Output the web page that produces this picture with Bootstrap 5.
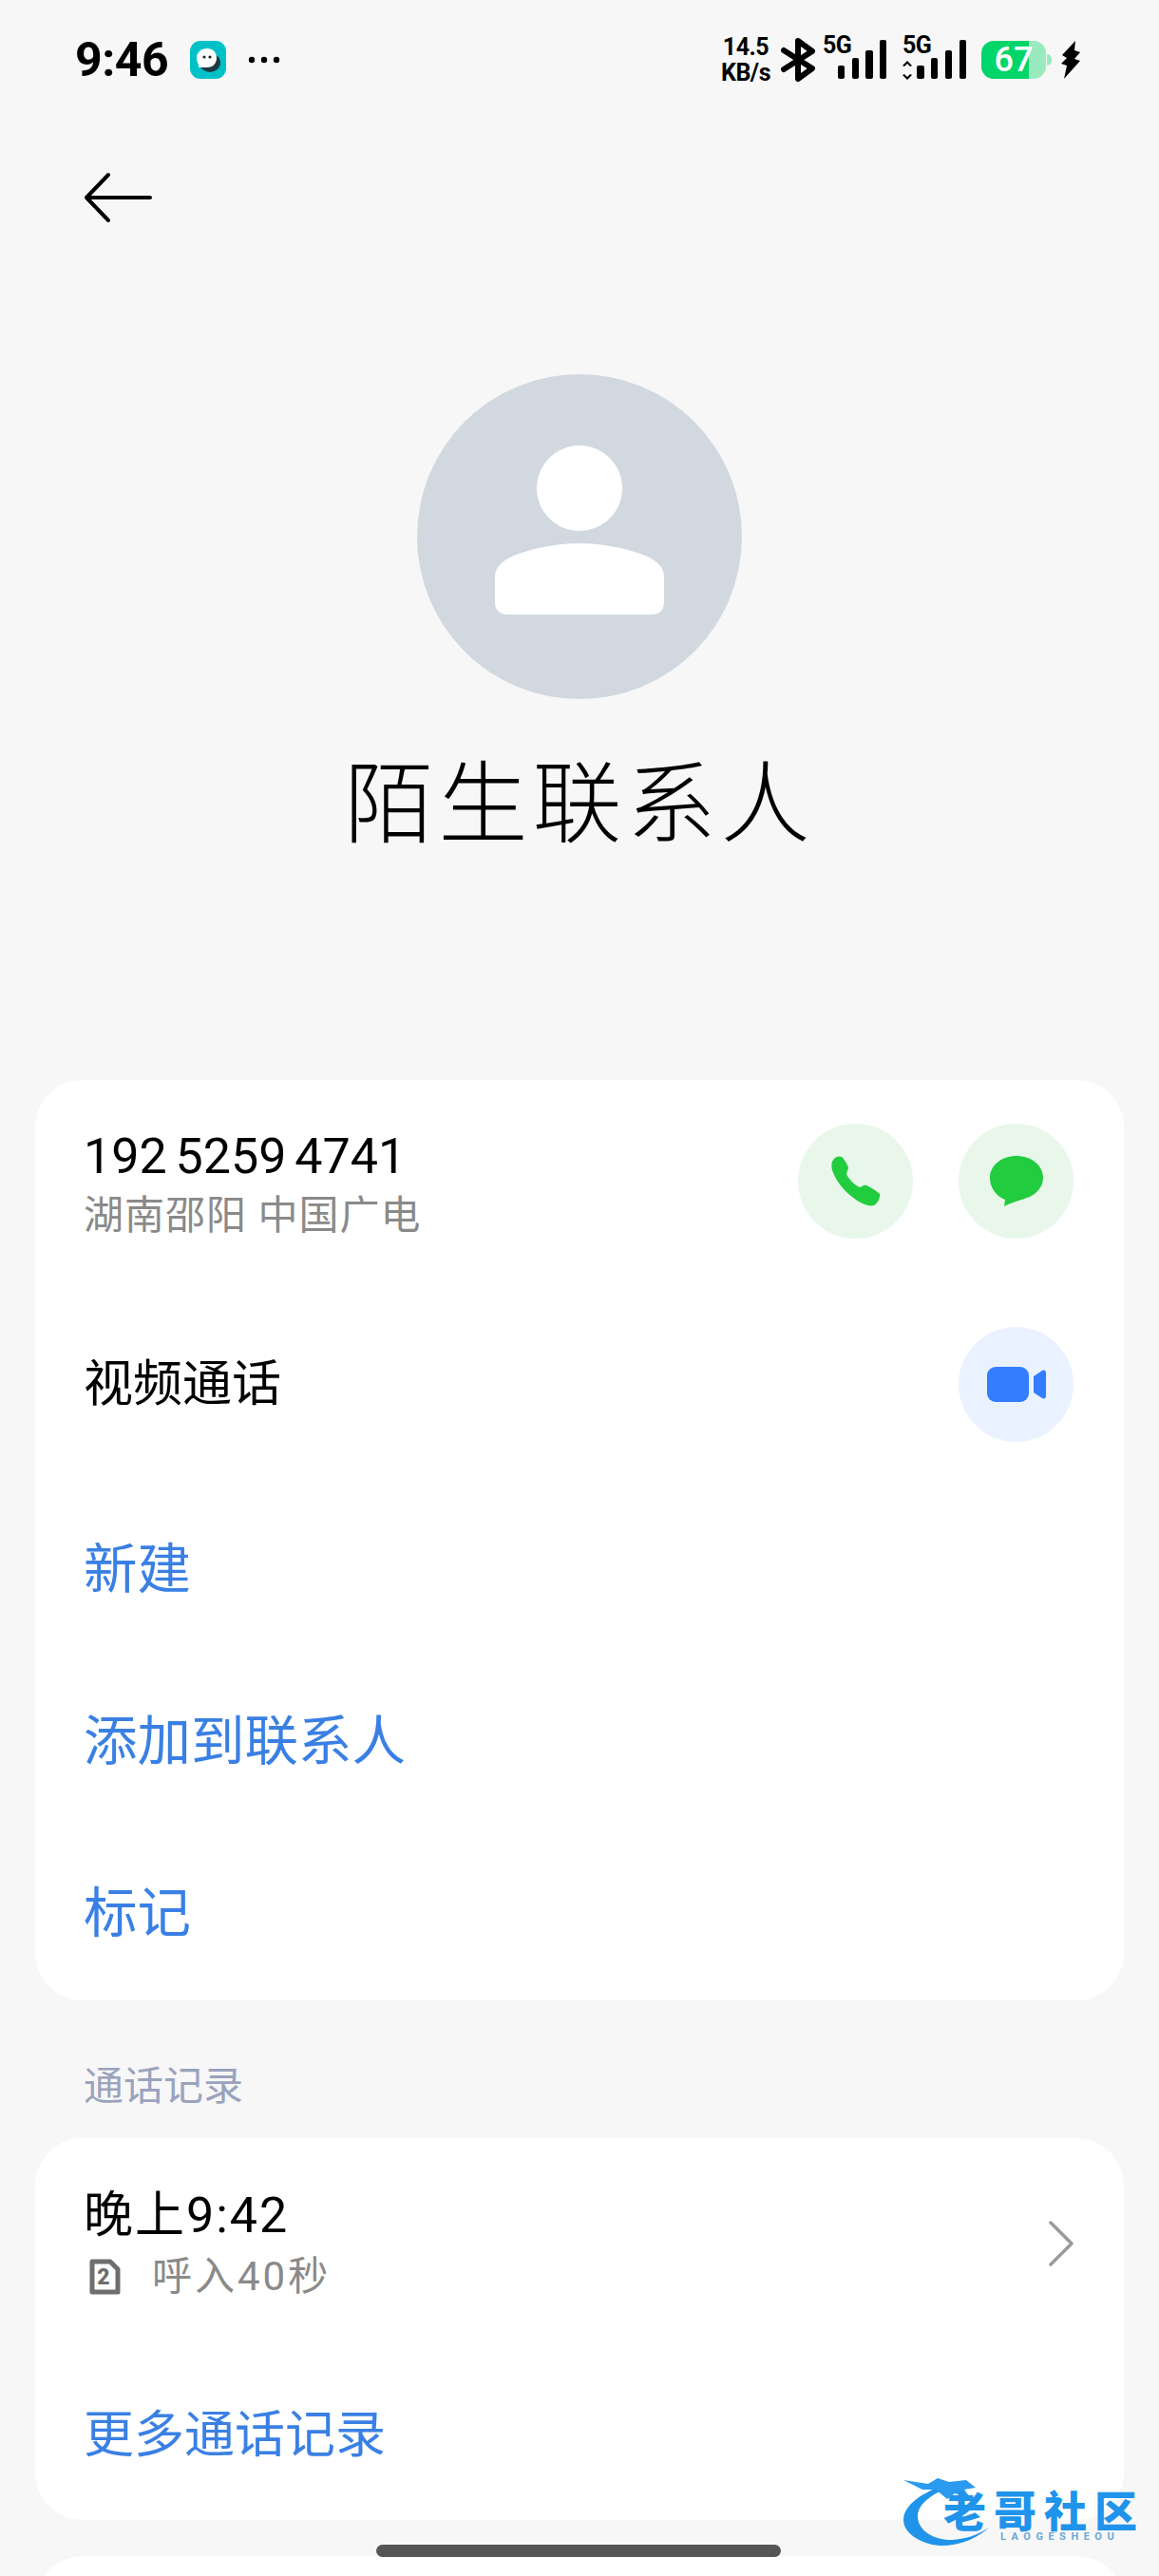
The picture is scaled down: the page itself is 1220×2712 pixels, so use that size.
<!DOCTYPE html>
<html lang="zh-CN">
<head>
  <meta charset="UTF-8">
  <meta name="viewport" content="width=device-width, initial-scale=1.0">
  <title>陌生联系人</title>

  <!-- Bootstrap CSS -->
  <link href="https://cdn.jsdelivr.net/npm/bootstrap@5.3.2/dist/css/bootstrap.min.css" rel="stylesheet">

  <style>
    body {
      background-color: #f7f7f7;
      font-family: Roboto, "Noto Sans CJK SC", sans-serif;
      color: #000;
      overflow: hidden;
    }

    .phone-page {
      position: relative;
      width: 1220px;
      height: 2712px;
      overflow: hidden;
    }

    .status-row {
      height: 126px;
      padding: 0 83px 0 79px;
    }

    .clock {
      width: 106px;
      font-size: 50px;
      font-weight: 700;
      letter-spacing: -.5px;
      line-height: 1;
    }

    .app-badge {
      width: 38px;
      height: 40px;
      margin-left: 15px;
    }

    .more-dots {
      width: 34px;
      height: 8px;
      margin-left: 23px;
    }

    .speed {
      width: 56px;
      margin-right: 9px;
      font-size: 25px;
      font-weight: 700;
      line-height: 27px;
      text-align: center;
      letter-spacing: -.5px;
    }

    .signal-box {
      position: relative;
      width: 68px;
      height: 44px;
    }

    .signal-box svg { display: block; }

    .five-g {
      position: absolute;
      top: -7px;
      left: 0;
      font-size: 25px;
      font-weight: 700;
      line-height: 28px;
      letter-spacing: -.5px;
    }

    .battery {
      position: relative;
      width: 68px;
      height: 40px;
      margin-left: 15px;
      border-radius: 13px;
      background: linear-gradient(90deg, #00d56a 0 74%, #9aeabf 74% 100%);
      color: #fff;
      font-size: 36px;
      font-weight: 500;
      line-height: 40px;
      text-align: center;
    }

    .battery::after {
      content: "";
      position: absolute;
      top: 14px;
      right: -6px;
      width: 5px;
      height: 12px;
      border-radius: 0 6px 6px 0;
      background: #9aeabf;
    }

    .back-row {
      height: 164px;
      padding-left: 88px;
    }

    .avatar {
      width: 342px;
      height: 342px;
      margin-top: 104px;
      background-color: #d1d8e0;
    }

    .contact-name {
      margin: 50px 0 0;
      font-size: 94px;
      font-weight: 300;
      letter-spacing: 5px;
      line-height: 124px;
      text-align: center;
    }

    .info-sheet {
      margin: 0 37px;
      border: 0;
      border-radius: 50px;
      background: #fff;
    }

    .sheet-main {
      margin-top: 227px;
      padding: 46px 53px 0 51px;
    }

    .line-top {
      height: 121px;
    }

    .line-video {
      height: 121px;
      margin-top: 93px;
      font-size: 52px;
    }

    .round-btn {
      flex: 0 0 121px;
      width: 121px;
      height: 121px;
      background-color: #e8f7ea;
    }

    .round-btn.video-tint { background-color: #e9f2fe; }

    .number-text {
      font-size: 52px;
      line-height: 60px;
      margin-top: 5px;
      word-spacing: -4px;
    }

    .place-text {
      margin-top: 7px;
      font-size: 42px;
      line-height: 50px;
      color: #8a8a8a;
      letter-spacing: 1px;
    }

    .action-line {
      height: 181px;
      font-size: 56.500px;
      color: #3a80e4;
    }

    .action-list { margin-top: 45px; }

    .section-label {
      margin: 0;
      padding: 65px 0 0 88px;
      height: 145px;
      font-size: 42px;
      line-height: 52px;
      color: #9aa3bd;
    }

    .call-sheet {
      height: 402px;
      padding: 51px 53px 0 51px;
    }

    .call-time {
      font-size: 52px;
      line-height: 62px;
      letter-spacing: 2px;
    }

    .call-sub {
      margin-top: 8px;
      font-size: 42px;
      line-height: 50px;
      color: #8a8a8a;
      letter-spacing: 3px;
    }

    .sim-icon { margin: 0 33px 0 6px; }

    .more-calls {
      margin-top: 111px;
      font-size: 53px;
      line-height: 62px;
      color: #3a80e4;
    }

    .next-sheet {
      height: 100px;
      margin-top: 38px;
    }

    .home-bar {
      position: absolute;
      left: 396px;
      top: 2679px;
      width: 426px;
      height: 13px;
      border-radius: 7px;
      background: #555;
    }

    .watermark {
      position: absolute;
      left: 950px;
      top: 2603px;
      width: 252px;
      height: 80px;
    }

    .watermark-title {
      position: absolute;
      left: 43px;
      top: 24px;
      font-size: 45px;
      font-weight: 900;
      line-height: 38px;
      letter-spacing: 8px;
      white-space: nowrap;
      color: #1f94ea;
    }

    .watermark-sub {
      position: absolute;
      left: 103px;
      top: 62px;
      font-size: 11px;
      font-weight: 700;
      line-height: 11px;
      letter-spacing: 5.500px;
      color: #6aa8d8;
    }
  </style>
</head>
<body>
  <div class="phone-page">
    <!-- Status bar -->
    <div class="status-row d-flex align-items-center">
      <span class="clock">9:46</span>
      <svg class="app-badge" viewBox="0 0 38 40">
        <rect width="38" height="40" rx="11" fill="#00c1c8"/>
        <ellipse cx="21" cy="23" rx="11" ry="10" fill="#1d3a44"/>
        <path d="M18 8c6 0 10 4 10 10s-4 10-10 10h-9v-3c-1-2-2-4-2-7 0-6 5-10 11-10z" fill="#fff"/>
        <circle cx="15" cy="17" r="1.6" fill="#222"/>
        <circle cx="21" cy="17" r="1.6" fill="#222"/>
      </svg>
      <svg class="more-dots" viewBox="0 0 34 8">
        <circle cx="4" cy="4" r="3.2"/>
        <circle cx="17" cy="4" r="3.2"/>
        <circle cx="30" cy="4" r="3.2"/>
      </svg>

      <div class="d-flex align-items-center ms-auto">
        <div class="speed">14.5<br>KB/s</div>
        <svg width="36" height="46" viewBox="0 0 36 46" class="me-2" fill="none" stroke="#000" stroke-width="6" stroke-linejoin="round" stroke-linecap="round">
          <path d="M3 13 33 32 18 43V3l15 11L3 33"/>
        </svg>
        <div class="signal-box">
          <span class="five-g">5G</span>
          <svg width="68" height="44" viewBox="0 0 68 44">
            <rect x="16" y="28" width="7" height="14" rx="2"/>
            <rect x="31" y="20" width="7" height="22" rx="2"/>
            <rect x="45" y="12" width="8" height="30" rx="2"/>
            <rect x="60" y="1" width="7" height="41" rx="2"/>
          </svg>
        </div>
        <div class="signal-box ms-3">
          <span class="five-g">5G</span>
          <svg width="68" height="44" viewBox="0 0 68 44">
            <path d="M5 23l5 5-2 1-3-3-3 3-2-1zM5 43l5-5-2-1-3 3-3-3-2 1z"/>
            <rect x="15" y="28" width="8" height="14" rx="2"/>
            <rect x="30" y="20" width="7" height="22" rx="2"/>
            <rect x="45" y="12" width="7" height="30" rx="2"/>
            <rect x="60" y="1" width="7" height="41" rx="2"/>
          </svg>
        </div>
        <div class="battery">67</div>
        <svg width="20" height="40" viewBox="0 0 20 40" class="ms-3">
          <path d="M15 0 1 15l5 3-6 6 6 2-3 14L20 21l-6-2 6-7-6-2z"/>
        </svg>
      </div>
    </div>

    <!-- Back -->
    <div class="back-row d-flex align-items-center">
      <svg width="72" height="54" viewBox="0 0 72 54" fill="none" stroke="#000" stroke-width="4" stroke-linecap="round" stroke-linejoin="round">
        <path d="M70 27H3M26 3 3 27l23 24"/>
      </svg>
    </div>

    <!-- Avatar and name -->
    <div class="avatar rounded-circle mx-auto d-flex align-items-center justify-content-center">
      <svg width="342" height="342" viewBox="0 0 342 342" fill="#fff">
        <circle cx="171" cy="120" r="45"/>
        <path d="M171 178c22 0 43 4 64 11 15 5 25 13 25 24v27c0 8-5 13-13 13H95c-8 0-13-5-13-13v-27c0-11 10-19 25-24 21-7 42-11 64-11z"/>
      </svg>
    </div>
    <h1 class="contact-name">陌生联系人</h1>

    <!-- Number card -->
    <div class="card info-sheet sheet-main">
      <div class="line-top d-flex align-items-start gap-5">
        <div class="flex-grow-1">
          <div class="number-text">192 5259 4741</div>
          <div class="place-text">湖南邵阳 中国广电</div>
        </div>
        <div class="round-btn rounded-circle d-flex align-items-center justify-content-center">
          <svg width="52" height="53" viewBox="0 0 52 53" fill="#22cc3f">
            <path d="M3 3C5 0 9 0 11 1c2 1 6 8 7 11 0 3-2 5-2 7 2 5 9 12 14 14 2 0 4-3 7-2 3 1 11 6 14 9 1 3-2 10-6 12-3 1-8 0-12-2C20 44 6 30 1 15 0 10 0 6 3 3z"/>
          </svg>
        </div>
        <div class="round-btn rounded-circle d-flex align-items-center justify-content-center">
          <svg width="58" height="54" viewBox="0 0 58 54" fill="#22cc3f">
            <path d="M29 0c16 0 28 10 28 23 0 9-6 16-14 20-8 3-17 5-27 10l1-7C7 42 1 33 1 23 1 10 13 0 29 0z"/>
          </svg>
        </div>
      </div>
      <div class="line-video d-flex align-items-center justify-content-between">
        <span>视频通话</span>
        <div class="round-btn video-tint rounded-circle d-flex align-items-center justify-content-center">
          <svg width="62" height="37" viewBox="0 0 62 37" fill="#337dff">
            <rect width="44" height="37" rx="9"/>
            <path d="M49 10l9-6c2-1 4 0 4 2v25c0 2-2 3-4 2l-9-6z"/>
          </svg>
        </div>
      </div>
      <div class="action-list">
        <div class="action-line d-flex align-items-center">新建</div>
        <div class="action-line d-flex align-items-center">添加到联系人</div>
        <div class="action-line d-flex align-items-center">标记</div>
      </div>
    </div>

    <!-- Call log -->
    <p class="section-label">通话记录</p>
    <div class="card info-sheet call-sheet">
      <div class="d-flex align-items-center justify-content-between">
        <div>
          <div class="call-time">晚上9:42</div>
          <div class="call-sub d-flex align-items-center">
            <svg class="sim-icon" width="33" height="38" viewBox="0 0 33 38" fill="none" stroke="#6e6e6e" stroke-width="5">
              <path d="M3 3h19l8 8v24H3z" stroke-linejoin="round"/>
              <text x="16.500" y="27" text-anchor="middle" font-size="23" font-weight="900" fill="#6e6e6e" stroke="none" font-family="Roboto, sans-serif">2</text>
            </svg>
            <span>呼入40秒</span>
          </div>
        </div>
        <svg width="26" height="48" viewBox="0 0 26 48" fill="none" stroke="#9a9a9a" stroke-width="3.500" stroke-linecap="round" stroke-linejoin="round">
          <path d="M2 2l22 22L2 46"/>
        </svg>
      </div>
      <div class="more-calls">更多通话记录</div>
    </div>

    <div class="card info-sheet next-sheet"></div>

    <!-- Overlays -->
    <div class="home-bar"></div>
    <div class="watermark">
      <svg width="110" height="80" viewBox="0 0 110 80">
        <path d="M48 12C22 20 1 34 1 50c0 18 30 31 52 26 18-3 30-11 38-18-12 8-24 12-38 13C35 72 16 62 16 46c0-12 14-24 38-32z" fill="#1f94ea"/>
        <path d="M1 8l26 4 10-6 12 4 18-2 10 8-12 2 6 8-16-4-8 6-12-10-14 0z" fill="#2a9bf0"/>
      </svg>
      <span class="watermark-title">老哥社区</span>
      <span class="watermark-sub">LAOGESHEOU</span>
    </div>
  </div>

  <!-- Bootstrap JS -->
  <script src="https://cdn.jsdelivr.net/npm/bootstrap@5.3.2/dist/js/bootstrap.bundle.min.js"></script>
</body>
</html>
